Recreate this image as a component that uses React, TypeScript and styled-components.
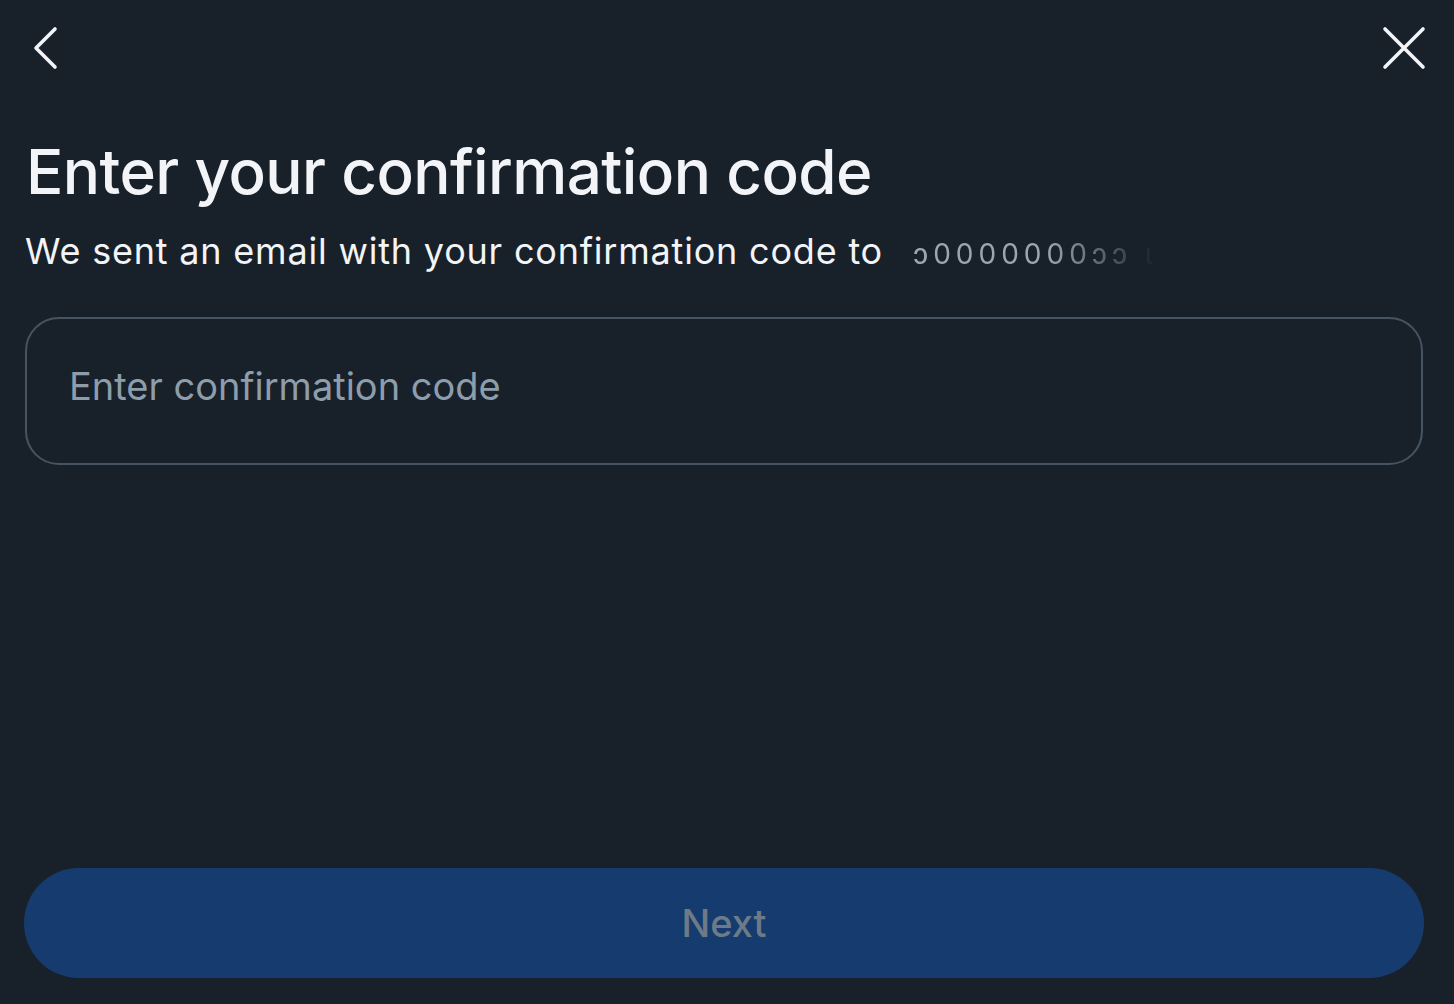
import styled, { createGlobalStyle } from "styled-components";

const GlobalStyle = createGlobalStyle`
  html, body {
    margin: 0;
    padding: 0;
    background: #18212a;
  }
  * {
    box-sizing: border-box;
  }
`;

export default function App() {
  return (
    <>
      <GlobalStyle />
      <Screen>
        <TopBar>
          <IconButton aria-label="Back">
            <svg width="40" height="48" viewBox="0 0 40 48" fill="none">
              <path d="M27 5 L8 24 L27 43" stroke="#f2f4f7" strokeWidth="3.6" strokeLinecap="round" strokeLinejoin="round" />
            </svg>
          </IconButton>
          <IconButton aria-label="Close">
            <svg width="44" height="44" viewBox="0 0 44 44" fill="none">
              <path d="M3 3 L41 41 M41 3 L3 41" stroke="#f2f4f7" strokeWidth="3.6" strokeLinecap="round" />
            </svg>
          </IconButton>
        </TopBar>
        <Content>
          <Title>Enter your confirmation code</Title>
          <Subtitle>
            We sent an email with your confirmation code to
            <MaskedEmail>ɔ0000000ɔɔ ɩ</MaskedEmail>
          </Subtitle>
          <CodeInput placeholder="Enter confirmation code" />
        </Content>
        <Footer>
          <NextButton disabled>Next</NextButton>
        </Footer>
      </Screen>
    </>
  );
}

const Screen = styled.div`
  width: 1454px;
  height: 1004px;
  display: flex;
  flex-direction: column;
  padding: 0 28px 26px 24px;
  background: #18212a;
  font-family: Inter, "Noto Sans", sans-serif;
  color: #f2f4f7;
`;

const TopBar = styled.div`
  display: flex;
  justify-content: space-between;
  align-items: center;
  height: 96px;
  padding: 0 0 0 4px;
`;

const IconButton = styled.button`
  display: flex;
  align-items: center;
  justify-content: center;
  padding: 0;
  border: none;
  background: transparent;
  cursor: pointer;
`;

const Content = styled.div`
  flex: 1;
  display: flex;
  flex-direction: column;
`;

const Title = styled.h1`
  margin: 38px 0 0 2px;
  font-size: 62px;
  font-weight: 500;
  line-height: 76px;
  letter-spacing: -0.6px;
  color: #f2f4f7;
`;

const Subtitle = styled.p`
  margin: 18px 0 0 1px;
  font-size: 36px;
  font-weight: 400;
  line-height: 46px;
  letter-spacing: 0.8px;
  color: #f2f4f7;
  white-space: nowrap;
`;

const MaskedEmail = styled.span`
  margin-left: 30px;
  font-size: 28px;
  letter-spacing: 5px;
  color: #9aa6b0;
  filter: blur(0.7px);
  -webkit-mask-image: linear-gradient(to right, #000 55%, transparent 100%);
  mask-image: linear-gradient(to right, #000 55%, transparent 100%);
`;

const CodeInput = styled.input`
  margin: 40px 0 0 1px;
  width: 1398px;
  height: 148px;
  padding: 0 42px 10px;
  border: 2px solid #465462;
  border-radius: 34px;
  background: transparent;
  font-family: Inter, "Noto Sans", sans-serif;
  font-size: 38px;
  color: #f2f4f7;
  outline: none;

  &::placeholder {
    color: #8d9daa;
  }
`;

const Footer = styled.div`
  display: flex;
`;

const NextButton = styled.button`
  width: 1400px;
  height: 110px;
  border: none;
  border-radius: 55px;
  background: #163c6f;
  font-family: Inter, "Noto Sans", sans-serif;
  font-size: 38px;
  font-weight: 500;
  color: #6d7a87;
`;
